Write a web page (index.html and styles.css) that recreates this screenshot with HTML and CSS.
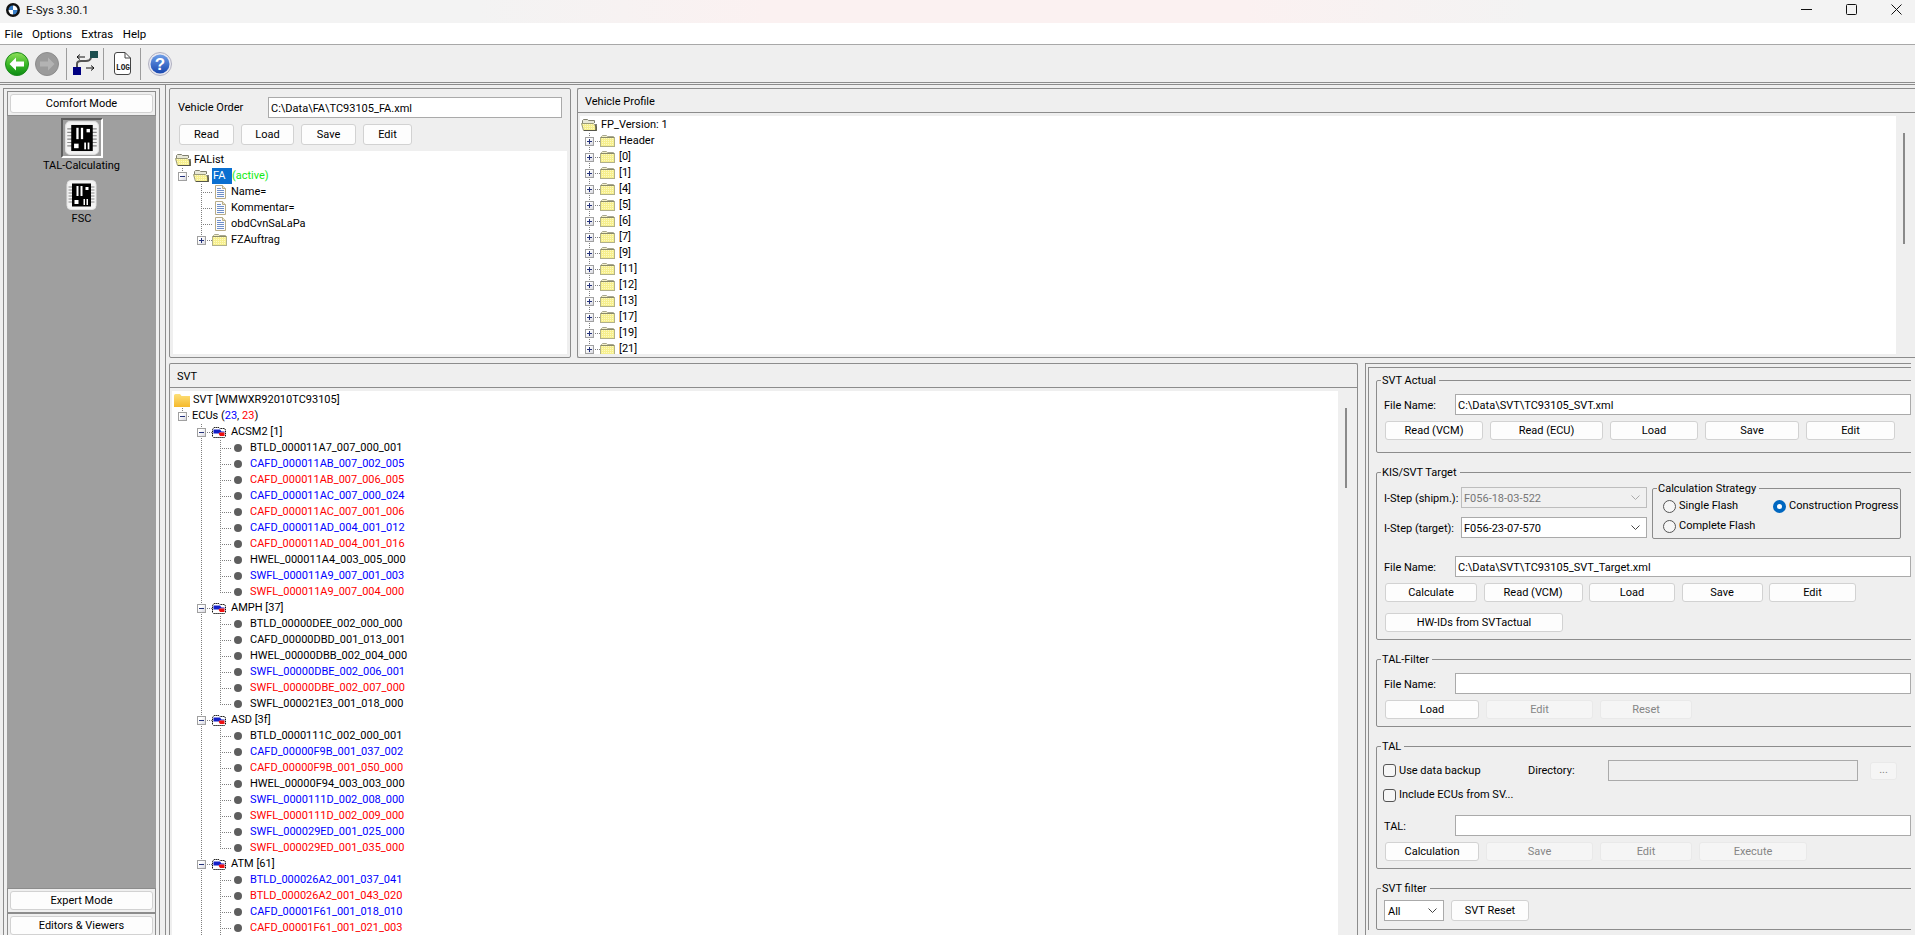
FILE: index.html
```html
<!DOCTYPE html>
<html lang="en">
<head>
<meta charset="utf-8">
<title>E-Sys 3.30.1</title>
<link rel="stylesheet" href="styles.css">
</head>
<body>
<svg class="sprite" width="0" height="0" aria-hidden="true">
  <defs>
    <linearGradient id="gGreen" x1="0" y1="0" x2="0" y2="1"><stop offset="0" stop-color="#8fe05a"/><stop offset=".55" stop-color="#35b524"/><stop offset="1" stop-color="#0c8a14"/></linearGradient>
    <linearGradient id="gBlue" x1="0" y1="0" x2="0" y2="1"><stop offset="0" stop-color="#6f9fe8"/><stop offset="1" stop-color="#1747b0"/></linearGradient>
    <linearGradient id="gFolder" x1="0" y1="0" x2="0" y2="1"><stop offset="0" stop-color="#fde07a"/><stop offset="1" stop-color="#f5b92c"/></linearGradient>
    <pattern id="pFolder" width="2" height="2" patternUnits="userSpaceOnUse"><rect width="2" height="2" fill="#f6ef8e"/><rect width="1" height="1" fill="#fdf9c4"/></pattern>
    <symbol id="folder" viewBox="0 0 15 14">
      <path d="M1.5 3.5V2.5L2.5 1.5H6.5L7.5 2.5H13.5V3.5" fill="#f3f0c8" stroke="#a8a890"/>
      <rect x=".5" y="3.5" width="14" height="9" fill="url(#pFolder)" stroke="#b0b08c"/>
      <path d="M1 3.5H14" stroke="#8a8a6a"/>
    </symbol>
    <symbol id="folderOpen" viewBox="0 0 16 14">
      <path d="M1.5 9V2.5L2.5 1.5H6.5L7.5 2.5H13.5V5" fill="#e8e8d8" stroke="#808070"/>
      <path d="M.5 5.5H12.5L15.5 9V12.5H2.5Z" fill="url(#pFolder)" stroke="#9a9a78"/>
      <path d="M15 6V13" stroke="#4a4a3c" stroke-width="1.4"/>
      <path d="M3 12.5H15" stroke="#55554a"/>
    </symbol>
    <symbol id="doc" viewBox="0 0 11 14">
      <path d="M.5.5H7.5L10.5 3.5V13.5H.5Z" fill="#fbfcff" stroke="#b8ac88"/>
      <path d="M7.5.5V3.5H10.5" fill="#e8e4d0" stroke="#b8ac88"/>
      <path d="M2 3.5H6M2 5.5H9M2 7.5H9M2 9.5H9M2 11.5H9" stroke="#6f8fc8"/>
    </symbol>
    <symbol id="ecu" viewBox="0 0 14 11">
      <path d="M.5 2.5L2 .5H7L8 1.5H12.5L13.5 3V9.5L12.5 10.5H1.5L.5 9.5Z" fill="#fff" stroke="#111" stroke-dasharray="1.4 .6"/>
      <path d="M1.5 2.5H8L9.5 4.5H12.5V5.5H8L6.5 6.5H1.5Z" fill="#1420c8"/>
      <path d="M6.5 6.5L8 5.5H12.5V9H8Z" fill="#ee1010"/>
    </symbol>
    <symbol id="chip" viewBox="0 0 30 30">
      <rect x=".5" y=".5" width="29" height="29" rx="4" fill="#f4f4f4" stroke="#e0e0e0"/>
      <path d="M2 7H28M2 10H28M2 13H28M2 16H28M2 19H28M2 22H28" stroke="#8a8a8a"/>
      <rect x="5.5" y="3.500" width="19" height="23" fill="#000"/>
      <rect x="10" y="6" width="2" height="10" fill="#fff"/><rect x="14" y="6" width="2" height="10" fill="#fff"/>
      <rect x="19" y="7" width="3" height="3" fill="#fff"/><rect x="8" y="20" width="4" height="4" fill="#fff"/>
      <rect x="17" y="19" width="1.500" height="6" fill="#fff"/><rect x="20" y="19" width="1.500" height="6" fill="#fff"/>
    </symbol>
    <symbol id="chev" viewBox="0 0 9 5"><path d="M.5.5L4.500 4.500L8.500.5" fill="none" stroke="currentColor"/></symbol>
  </defs>
</svg>

<header class="titlebar">
  <svg class="logo" width="14" height="14" viewBox="0 0 14 14"><circle cx="7" cy="7" r="7" fill="#111"/><path d="M7 2.500A4.500 4.500 0 0 1 11.500 7H7Z" fill="#fff"/><path d="M7 11.500A4.500 4.500 0 0 1 2.500 7H7Z" fill="#fff"/><path d="M7 2.500A4.500 4.500 0 0 0 2.500 7H7Z" fill="#3a7fc8"/><path d="M7 11.500A4.500 4.500 0 0 0 11.500 7H7Z" fill="#3a7fc8"/></svg>
  <span class="apptitle">E-Sys 3.30.1</span>
  <div class="winctl">
    <svg width="11" height="11" viewBox="0 0 11 11"><path d="M0 5.500H11" stroke="#111"/></svg>
    <svg width="11" height="11" viewBox="0 0 11 11"><rect x=".5" y=".5" width="10" height="10" rx="1" fill="none" stroke="#111"/></svg>
    <svg width="11" height="11" viewBox="0 0 11 11"><path d="M.5.5L10.500 10.500M10.500.5L.5 10.500" stroke="#111"/></svg>
  </div>
</header>

<nav class="menubar"><span>File</span><span>Options</span><span>Extras</span><span>Help</span></nav>

<div class="toolbar">
  <svg class="tb-back" width="24" height="24" viewBox="0 0 24 24"><circle cx="12" cy="12" r="11.500" fill="url(#gGreen)" stroke="#1c8a1c"/><path d="M11 5.500L4.500 12L11 18.500V14.500H19V9.500H11Z" fill="#fff"/></svg>
  <svg class="tb-fwd" width="24" height="24" viewBox="0 0 24 24"><circle cx="12" cy="12" r="11.500" fill="#9b9b9b" stroke="#8c8c8c"/><path d="M13 5.500L19.500 12L13 18.500V14.500H5V9.500H13Z" fill="#b3b3b3"/></svg>
  <i class="tb-sep"></i>
  <svg class="tb-flow" width="26" height="26" viewBox="0 0 26 26"><rect x="18" y="0" width="8" height="7" fill="#1d4f50"/><rect x="1" y="16" width="8" height="8" fill="#000080"/><path d="M5 16V13Q5 10 9 10H14Q18 10 19 7" fill="none" stroke="#555" stroke-width="2"/><path d="M5 6H13M5 6L8 3.500M5 6L8 8.500" stroke="#111" fill="none"/><path d="M14 17H22M22 17L19 14.500M22 17L19 19.500" stroke="#111" fill="none"/></svg>
  <i class="tb-sep tb-sep2"></i>
  <svg class="tb-log" width="18" height="23" viewBox="0 0 18 23"><path d="M1.500 3Q1.500 .5 4 .5H12L17.500 6V20Q17.500 22.500 15 22.500H4Q1.500 22.500 1.500 20Z" fill="#fff" stroke="#444"/><path d="M12 .5V6H17.500" fill="none" stroke="#444"/><text x="3" y="18" class="logtext" textLength="14" lengthAdjust="spacingAndGlyphs">LOG</text></svg>
  <i class="tb-sep tb-sep3"></i>
  <svg class="tb-help" width="24" height="24" viewBox="0 0 24 24"><circle cx="12" cy="12" r="11.500" fill="#e8e8f0" stroke="#b0b0c0"/><circle cx="12" cy="12" r="9.500" fill="url(#gBlue)"/><text x="12" y="18" class="helptext" text-anchor="middle">?</text></svg>
</div>

<div class="workspace">
  <aside class="sidebar">
    <div class="band"><div class="btn">Comfort Mode</div></div>
    <div class="tiles">
      <div class="tile-sel"><svg width="34" height="34"><use href="#chip"/></svg></div>
      <div class="tile-label">TAL-Calculating</div>
      <svg class="tile" width="31" height="30"><use href="#chip"/></svg>
      <div class="tile-label">FSC</div>
    </div>
    <div class="band"><div class="btn">Expert Mode</div></div>
    <div class="band band-last"><div class="btn">Editors &amp; Viewers</div></div>
  </aside>

  <main class="content">
    <div class="top">
      <section class="panel vo">
        <div class="vo-head"><span class="vo-label">Vehicle Order</span><div class="field vo-field">C:\Data\FA\TC93105_FA.xml</div></div>
        <div class="btns btns-vo"><div class="btn">Read</div><div class="btn">Load</div><div class="btn">Save</div><div class="btn">Edit</div></div>
        <div class="tree vo-tree">
          <div class="row p2"><svg class="ic16"><use href="#folderOpen"/></svg><span class="ml3">FAList</span></div>
          <div class="row p1"><span class="exp only"><b class="box minus"></b></span><svg class="ic16 ml3"><use href="#folderOpen"/></svg><span class="sel">FA</span><span class="active">(active)</span></div>
          <div class="row p28"><i class="tick"></i><svg class="ic-doc"><use href="#doc"/></svg><span class="ml5">Name=</span></div>
          <div class="row p28"><i class="tick"></i><svg class="ic-doc"><use href="#doc"/></svg><span class="ml5">Kommentar=</span></div>
          <div class="row p28"><i class="tick"></i><svg class="ic-doc"><use href="#doc"/></svg><span class="ml5">obdCvnSaLaPa</span></div>
          <div class="row p20"><span class="exp wide only"><b class="box plus"></b></span><svg class="ic15"><use href="#folder"/></svg><span class="ml4">FZAuftrag</span></div>
        </div>
      </section>
      <section class="panel vp">
        <div class="panel-head">Vehicle Profile</div>
        <div class="panel-body">
          <div class="tree vp-tree">
            <div class="row p1"><svg class="ic16"><use href="#folderOpen"/></svg><span class="ml4">FP_Version: 1</span></div>
            <div class="row p1"><span class="exp wide"><b class="box plus"></b></span><svg class="ic15"><use href="#folder"/></svg><span class="ml4">Header</span></div>
            <div class="row p1"><span class="exp wide"><b class="box plus"></b></span><svg class="ic15"><use href="#folder"/></svg><span class="ml4">[0]</span></div>
            <div class="row p1"><span class="exp wide"><b class="box plus"></b></span><svg class="ic15"><use href="#folder"/></svg><span class="ml4">[1]</span></div>
            <div class="row p1"><span class="exp wide"><b class="box plus"></b></span><svg class="ic15"><use href="#folder"/></svg><span class="ml4">[4]</span></div>
            <div class="row p1"><span class="exp wide"><b class="box plus"></b></span><svg class="ic15"><use href="#folder"/></svg><span class="ml4">[5]</span></div>
            <div class="row p1"><span class="exp wide"><b class="box plus"></b></span><svg class="ic15"><use href="#folder"/></svg><span class="ml4">[6]</span></div>
            <div class="row p1"><span class="exp wide"><b class="box plus"></b></span><svg class="ic15"><use href="#folder"/></svg><span class="ml4">[7]</span></div>
            <div class="row p1"><span class="exp wide"><b class="box plus"></b></span><svg class="ic15"><use href="#folder"/></svg><span class="ml4">[9]</span></div>
            <div class="row p1"><span class="exp wide"><b class="box plus"></b></span><svg class="ic15"><use href="#folder"/></svg><span class="ml4">[11]</span></div>
            <div class="row p1"><span class="exp wide"><b class="box plus"></b></span><svg class="ic15"><use href="#folder"/></svg><span class="ml4">[12]</span></div>
            <div class="row p1"><span class="exp wide"><b class="box plus"></b></span><svg class="ic15"><use href="#folder"/></svg><span class="ml4">[13]</span></div>
            <div class="row p1"><span class="exp wide"><b class="box plus"></b></span><svg class="ic15"><use href="#folder"/></svg><span class="ml4">[17]</span></div>
            <div class="row p1"><span class="exp wide"><b class="box plus"></b></span><svg class="ic15"><use href="#folder"/></svg><span class="ml4">[19]</span></div>
            <div class="row p1"><span class="exp wide"><b class="box plus"></b></span><svg class="ic15"><use href="#folder"/></svg><span class="ml4">[21]</span></div>
          </div>
          <div class="gutter"><i class="thumb thumb-vp"></i></div>
        </div>
      </section>
    </div>

    <div class="bottom">
      <section class="panel svt">
        <div class="panel-head">SVT</div>
        <div class="panel-body">
          <div class="tree svt-tree">
            <div class="row p2"><svg class="ic-root" viewBox="0 0 16 13"><path d="M0 1.500Q0 0 1.500 0H6L7.500 2H16V13H0Z" fill="url(#gFolder)"/></svg><span class="ml3">SVT [WMWXR92010TC93105]</span></div>
            <div class="row p2"><span class="exp only"><b class="box minus"></b></span><span class="ml2">ECUs (<span class="blue">23</span>, <span class="red">23</span>)</span></div>

            <div class="row p21"><span class="exp wide"><b class="box minus"></b></span><svg class="ic-ecu"><use href="#ecu"/></svg><span class="ml5">ACSM2 [1]</span></div>
            <div class="row leaf"><i class="guide"></i><i class="tick"></i><i class="dot"></i><span>BTLD_000011A7_007_000_001</span></div>
            <div class="row leaf"><i class="guide"></i><i class="tick"></i><i class="dot"></i><span class="blue">CAFD_000011AB_007_002_005</span></div>
            <div class="row leaf"><i class="guide"></i><i class="tick"></i><i class="dot"></i><span class="red">CAFD_000011AB_007_006_005</span></div>
            <div class="row leaf"><i class="guide"></i><i class="tick"></i><i class="dot"></i><span class="blue">CAFD_000011AC_007_000_024</span></div>
            <div class="row leaf"><i class="guide"></i><i class="tick"></i><i class="dot"></i><span class="red">CAFD_000011AC_007_001_006</span></div>
            <div class="row leaf"><i class="guide"></i><i class="tick"></i><i class="dot"></i><span class="blue">CAFD_000011AD_004_001_012</span></div>
            <div class="row leaf"><i class="guide"></i><i class="tick"></i><i class="dot"></i><span class="red">CAFD_000011AD_004_001_016</span></div>
            <div class="row leaf"><i class="guide"></i><i class="tick"></i><i class="dot"></i><span>HWEL_000011A4_003_005_000</span></div>
            <div class="row leaf"><i class="guide"></i><i class="tick"></i><i class="dot"></i><span class="blue">SWFL_000011A9_007_001_003</span></div>
            <div class="row leaf"><i class="guide"></i><i class="tick last"></i><i class="dot"></i><span class="red">SWFL_000011A9_007_004_000</span></div>

            <div class="row p21"><span class="exp wide"><b class="box minus"></b></span><svg class="ic-ecu"><use href="#ecu"/></svg><span class="ml5">AMPH [37]</span></div>
            <div class="row leaf"><i class="guide"></i><i class="tick"></i><i class="dot"></i><span>BTLD_00000DEE_002_000_000</span></div>
            <div class="row leaf"><i class="guide"></i><i class="tick"></i><i class="dot"></i><span>CAFD_00000DBD_001_013_001</span></div>
            <div class="row leaf"><i class="guide"></i><i class="tick"></i><i class="dot"></i><span>HWEL_00000DBB_002_004_000</span></div>
            <div class="row leaf"><i class="guide"></i><i class="tick"></i><i class="dot"></i><span class="blue">SWFL_00000DBE_002_006_001</span></div>
            <div class="row leaf"><i class="guide"></i><i class="tick"></i><i class="dot"></i><span class="red">SWFL_00000DBE_002_007_000</span></div>
            <div class="row leaf"><i class="guide"></i><i class="tick last"></i><i class="dot"></i><span>SWFL_000021E3_001_018_000</span></div>

            <div class="row p21"><span class="exp wide"><b class="box minus"></b></span><svg class="ic-ecu"><use href="#ecu"/></svg><span class="ml5">ASD [3f]</span></div>
            <div class="row leaf"><i class="guide"></i><i class="tick"></i><i class="dot"></i><span>BTLD_0000111C_002_000_001</span></div>
            <div class="row leaf"><i class="guide"></i><i class="tick"></i><i class="dot"></i><span class="blue">CAFD_00000F9B_001_037_002</span></div>
            <div class="row leaf"><i class="guide"></i><i class="tick"></i><i class="dot"></i><span class="red">CAFD_00000F9B_001_050_000</span></div>
            <div class="row leaf"><i class="guide"></i><i class="tick"></i><i class="dot"></i><span>HWEL_00000F94_003_003_000</span></div>
            <div class="row leaf"><i class="guide"></i><i class="tick"></i><i class="dot"></i><span class="blue">SWFL_0000111D_002_008_000</span></div>
            <div class="row leaf"><i class="guide"></i><i class="tick"></i><i class="dot"></i><span class="red">SWFL_0000111D_002_009_000</span></div>
            <div class="row leaf"><i class="guide"></i><i class="tick"></i><i class="dot"></i><span class="blue">SWFL_000029ED_001_025_000</span></div>
            <div class="row leaf"><i class="guide"></i><i class="tick last"></i><i class="dot"></i><span class="red">SWFL_000029ED_001_035_000</span></div>

            <div class="row p21"><span class="exp wide"><b class="box minus"></b></span><svg class="ic-ecu"><use href="#ecu"/></svg><span class="ml5">ATM [61]</span></div>
            <div class="row leaf"><i class="guide"></i><i class="tick"></i><i class="dot"></i><span class="blue">BTLD_000026A2_001_037_041</span></div>
            <div class="row leaf"><i class="guide"></i><i class="tick"></i><i class="dot"></i><span class="red">BTLD_000026A2_001_043_020</span></div>
            <div class="row leaf"><i class="guide"></i><i class="tick"></i><i class="dot"></i><span class="blue">CAFD_00001F61_001_018_010</span></div>
            <div class="row leaf"><i class="guide"></i><i class="tick"></i><i class="dot"></i><span class="red">CAFD_00001F61_001_021_003</span></div>
          </div>
          <div class="gutter"><i class="thumb thumb-svt"></i></div>
        </div>
      </section>

      <section class="outer">
        <div class="inner">
          <fieldset class="group">
            <legend>SVT Actual</legend>
            <div class="file-row"><span class="flabel">File Name:</span><div class="field">C:\Data\SVT\TC93105_SVT.xml</div></div>
            <div class="btns btns-actual"><div class="btn">Read (VCM)</div><div class="btn">Read (ECU)</div><div class="btn">Load</div><div class="btn">Save</div><div class="btn">Edit</div></div>
          </fieldset>

          <fieldset class="group kis">
            <legend>KIS/SVT Target</legend>
            <div class="kis-top">
              <div class="kis-left">
                <div class="step-row"><span class="slabel">I-Step (shipm.):</span><div class="combo off"><span>F056-18-03-522</span><svg class="chev"><use href="#chev"/></svg></div></div>
                <div class="step-row"><span class="slabel">I-Step (target):</span><div class="combo"><span>F056-23-07-570</span><svg class="chev"><use href="#chev"/></svg></div></div>
              </div>
              <fieldset class="strategy">
                <legend>Calculation Strategy</legend>
                <div class="radios">
                  <label class="opt"><i class="radio"></i>Single Flash</label>
                  <label class="opt"><i class="radio on"></i>Construction Progress</label>
                  <label class="opt"><i class="radio"></i>Complete Flash</label>
                </div>
              </fieldset>
            </div>
            <div class="file-row"><span class="flabel">File Name:</span><div class="field">C:\Data\SVT\TC93105_SVT_Target.xml</div></div>
            <div class="btns btns-target"><div class="btn">Calculate</div><div class="btn">Read (VCM)</div><div class="btn">Load</div><div class="btn">Save</div><div class="btn">Edit</div></div>
            <div class="btns btns-hw"><div class="btn">HW-IDs from SVTactual</div></div>
          </fieldset>

          <fieldset class="group">
            <legend>TAL-Filter</legend>
            <div class="file-row"><span class="flabel">File Name:</span><div class="field"></div></div>
            <div class="btns btns-tal"><div class="btn">Load</div><div class="btn off">Edit</div><div class="btn off">Reset</div></div>
          </fieldset>

          <fieldset class="group">
            <legend>TAL</legend>
            <div class="tal-top">
              <label class="opt"><i class="check"></i>Use data backup</label>
              <span>Directory:</span>
              <div class="field off"></div>
              <div class="btn off dots">...</div>
            </div>
            <label class="opt include"><i class="check"></i>Include ECUs from SV...</label>
            <div class="file-row"><span class="flabel">TAL:</span><div class="field"></div></div>
            <div class="btns btns-tal"><div class="btn">Calculation</div><div class="btn off">Save</div><div class="btn off">Edit</div><div class="btn off">Execute</div></div>
          </fieldset>

          <fieldset class="group last">
            <legend>SVT filter</legend>
            <div class="filter-row"><div class="combo small"><span>All</span><svg class="chev"><use href="#chev"/></svg></div><div class="btn reset">SVT Reset</div></div>
          </fieldset>
        </div>
      </section>
    </div>
  </main>
</div>
</body>
</html>
```

FILE: styles.css
```css
* { box-sizing: border-box; }
html, body { margin: 0; padding: 0; }
body {
  width: 1915px; height: 935px; overflow: hidden;
  display: flex; flex-direction: column;
  background: #efefef; color: #000;
  font: 11px/14px Roboto, "Liberation Sans", sans-serif;
}
.sprite { position: absolute; }
i, b { display: block; }

.titlebar {
  flex: none; height: 23px; display: flex; align-items: center; padding: 0 13px 4px 6px;
  background: linear-gradient(90deg, #f3f3f3 25%, #fbf1f1 40%, #fbf1f1 65%, #f3f3f3 80%);
}
.apptitle { font-size: 11.5px; margin-left: 6px; color: #111; }
.winctl { margin-left: auto; display: flex; gap: 34px; }

.menubar {
  flex: none; height: 21px; display: flex; align-items: center; gap: 9.5px; padding-left: 4.5px;
  background: #fff; font-size: 11.5px;
}

.toolbar {
  flex: none; height: 39px; display: flex; align-items: center; padding-left: 5px;
  border-top: 1px solid #a8a8a8; border-bottom: 1px solid #8c8c8c; background: #efefef;
}
.tb-fwd { margin-left: 6px; }
.tb-sep { width: 1px; height: 32px; background: #9c9c9c; margin-left: 7px; }
.tb-flow { margin-left: 5px; }
.tb-sep2 { margin-left: 5px; }
.tb-log { margin-left: 9px; }
.tb-sep3 { margin-left: 9px; }
.tb-help { margin-left: 7px; }
.logtext { font: 700 9px "Liberation Mono", monospace; fill: #222; }
.helptext { font: 700 17px "Liberation Sans", sans-serif; fill: #fff; }

.workspace {
  flex: none; height: 851px; margin-top: 1px; display: flex; align-items: stretch;
  border-top: 1px solid #8c8c8c; overflow: hidden;
}

.sidebar {
  flex: none; width: 157px; height: 847px; margin: 3px 0 0 3px; padding: 2px 3px 0;
  display: flex; flex-direction: column;
  border: 1px solid #8c8c8c; border-bottom: 0;
}
.band { flex: none; height: 25px; padding: 2px; border: 1px solid #8c8c8c; }
.band-last { height: 22px; border-bottom: 0; }
.tiles {
  flex: 1; background: #9f9f9f; display: flex; flex-direction: column; align-items: center; padding-top: 2px;
}
.tile-sel {
  width: 42px; height: 40px; display: flex; align-items: center; justify-content: center;
  border: 2px solid; border-color: #5e5e5e #fff #fff #5e5e5e;
}
.tile-label { height: 14px; margin: 1px 0 7px; color: #000; white-space: nowrap; }
.tile { display: block; }
.tile + .tile-label { margin-top: 2px; }

.content {
  flex: none; width: 1750px; margin-left: 5px; padding: 3px 0 0 3px;
  border-left: 1px solid #8c8c8c; display: flex; flex-direction: column; gap: 5px;
}
.top { flex: none; height: 270px; display: flex; gap: 6px; }
.bottom { flex: none; height: 600px; display: flex; gap: 7px; }

.panel { border: 1px solid #8c8c8c; border-radius: 2px; display: flex; flex-direction: column; }
.vo { flex: none; width: 402px; padding: 8px 3px 3px; }
.vp { flex: none; width: 1345px; border-right: 0; }
.svt { flex: none; width: 1189px; border-bottom: 0; }
.panel-head { flex: none; height: 24px; line-height: 26px; padding-left: 7px; border-bottom: 1px solid #8c8c8c; }
.panel-body { flex: 1; min-height: 0; display: flex; padding: 3px 0 3px 2px; }
.svt .panel-body { padding-bottom: 0; }
.vp .tree { width: 1316px; flex: none; }
.svt .tree { flex: none; width: 1166px; }
.gutter { flex: none; padding-left: 7px; padding-top: 17px; }
.thumb { width: 2px; background: #8a8a8a; }
.thumb-vp { height: 111px; }
.thumb-svt { height: 80px; }

.field {
  flex: 1; min-width: 0; height: 21px; line-height: 21px; padding-left: 2px;
  background: #fff; border: 1px solid #aaa; white-space: nowrap; overflow: hidden;
}
.field.off { background: #efefef; }

.vo-head { flex: none; height: 21px; display: flex; align-items: center; padding-left: 5px; }
.vo-label { width: 90px; white-space: nowrap; }
.vo-field { flex: none; width: 294px; }
.vo-tree { flex: 1; margin-top: 6px; }

.btns { display: grid; column-gap: 7px; justify-content: start; }
.btn {
  height: 19px; line-height: 17px; text-align: center; white-space: nowrap;
  background: #fdfdfd; border: 1px solid #d2d2d2; border-radius: 3px;
}
.btn.off { background: #f5f5f5; border-color: #e9e9e9; color: #858585; }
.btns-vo { margin: 6px 0 0 6px; grid-template-columns: 55px 53px 55px 49px; }
.btns-vo .btn { height: 21px; line-height: 20px; }

.tree { background: #fff; overflow: hidden; padding-top: 1px; }
.row { display: flex; align-items: center; height: 16px; white-space: nowrap; }
.p1 { padding-left: 1px; }
.p2 { padding-left: 2px; }
.p20 { padding-left: 20px; }
.p21 { padding-left: 21px; }
.p28 { padding-left: 28px; }
.leaf { padding-left: 29px; }
.ml2 { margin-left: 2px; }
.ml3 { margin-left: 3px; }
.ml4 { margin-left: 4px; }
.ml5 { margin-left: 5px; }

.ic16 { width: 16px; height: 14px; flex: none; }
.ic15 { width: 15px; height: 14px; flex: none; }
.ic-doc { width: 11px; height: 14px; flex: none; margin-left: 2px; }
.ic-root { width: 16px; height: 13px; flex: none; }
.ic-ecu { width: 14px; height: 11px; flex: none; }

.exp, .guide, .tick {
  flex: none; height: 16px;
  background-image:
    repeating-linear-gradient(to bottom, #7f7f7f 0 1px, transparent 1px 2px),
    repeating-linear-gradient(to right, #7f7f7f 0 1px, transparent 1px 2px);
  background-repeat: no-repeat;
}
.exp {
  width: 16px; display: flex; align-items: center; padding-left: 4px;
  background-size: 1px 100%, 8px 1px;
  background-position: 8px 0, 8px 8px;
}
.exp.wide { width: 19px; background-size: 1px 100%, 11px 1px; }
.exp.only { background-size: 1px 8px, 8px 1px; }
.exp.wide.only { background-size: 1px 8px, 11px 1px; }
.guide { width: 19px; background-size: 1px 100%, 0 0; }
.tick { width: 12px; background-size: 1px 100%, 12px 1px; background-position: 0 0, 0 8px; }
.tick.last { background-size: 1px 9px, 12px 1px; }
.dot { flex: none; width: 8px; height: 8px; border-radius: 50%; background: #5e5e5e; margin: 0 8px 0 2px; }

.box {
  position: relative; width: 9px; height: 9px; border: 1px solid #a0a0a0;
  background: linear-gradient(135deg, #fff 30%, #d8d8e0);
}
.box::before { content: ""; position: absolute; left: 1px; top: 3px; width: 5px; height: 1px; background: #24327a; }
.plus::after { content: ""; position: absolute; left: 3px; top: 1px; width: 1px; height: 5px; background: #24327a; }

.sel { margin-left: 3px; padding: 0 4px 0 1px; width: 20px; height: 16px; line-height: 16px; background: #0a6fd0; color: #fff; }
.active { color: #14ea14; }
.blue { color: #0000ff; }
.red { color: #ff0000; }

.outer {
  flex: none; width: 546px; padding: 3px 0 0 2px; overflow: hidden;
  border-left: 1px solid #8c8c8c; border-top: 1px solid #8c8c8c;
}
.inner {
  width: 600px; padding: 5px 0 0 7px; display: flex; flex-direction: column; gap: 12px;
  border-left: 1px solid #8c8c8c; border-top: 1px solid #8c8c8c;
}
fieldset { margin: 0; min-width: 0; border: 1px solid #8c8c8c; border-radius: 2px; }
legend { margin: 0 0 -1px -3px; padding: 1px 3px 0 1px; line-height: 14px; }
.group { flex: none; padding: 7px 0 7px 7px; }
.group:first-child { padding-bottom: 12px; }
.group.last { padding: 5px 0 8px 7px; }
.kis { padding-top: 2px; }

.file-row { display: flex; align-items: center; width: 527px; }
.flabel { flex: none; width: 71px; padding-top: 2px; }
.group .btns { margin: 6px 0 0 1px; }
.btns-actual { grid-template-columns: 98px 113px 88px 94px 89px; }
.btns-target { grid-template-columns: 92px 99px 86px 81px 87px; column-gap: 6.5px; }
.group .btns-hw { margin-top: 11px; grid-template-columns: 178px; }
.btns-tal { grid-template-columns: 94px 107px 92px 108px; }

.kis-top { display: flex; gap: 5px; margin-bottom: 17px; }
.kis-left { flex: none; width: 263px; padding-top: 6px; display: flex; flex-direction: column; gap: 9px; }
.step-row { display: flex; align-items: center; height: 21px; }
.slabel { flex: none; width: 77px; white-space: nowrap; padding-top: 2px; }
.combo {
  flex: 1; height: 21px; display: flex; align-items: center; justify-content: space-between;
  padding: 0 6px 0 2px; background: #fff; border: 1px solid #aaa; color: #000;
}
.combo span { padding-top: 2px; }
.combo.off { background: #f0f0f0; border-color: #bdbdbd; color: #777; }
.combo.small { flex: none; width: 60px; padding-left: 3px; }
.chev { width: 9px; height: 5px; color: #444; }
.combo.off .chev { color: #aaa; }

.strategy { flex: none; width: 249px; height: 58px; padding: 1px 0 0 10px; }
.strategy legend { margin-left: -6px; }
.radios { display: grid; grid-template-columns: 110px auto; grid-auto-rows: 20px; align-items: center; }
.opt { display: flex; align-items: center; gap: 3px; white-space: nowrap; line-height: 16px; }
.radio { flex: none; width: 13px; height: 13px; border-radius: 50%; border: 1px solid #555; background: #f6f6f6; }
.radio.on { border: 4px solid #0067c0; background: #fff; }
.check { flex: none; width: 13px; height: 13px; border-radius: 3px; border: 1px solid #555; background: #f6f6f6; }

.tal-top { display: grid; grid-template-columns: 144px 81px 250px 26px; column-gap: 0; align-items: center; height: 21px; margin-left: -1px; }
.tal-top span { margin-left: 1px; }
.dots { margin-left: 12px; width: 27px; height: 18px; line-height: 14px; }
.include { height: 20px; margin: 4px 0 10px -1px; }
.filter-row { display: flex; gap: 7px; }
.reset { flex: none; width: 78px; height: 21px; line-height: 19px; }
```
